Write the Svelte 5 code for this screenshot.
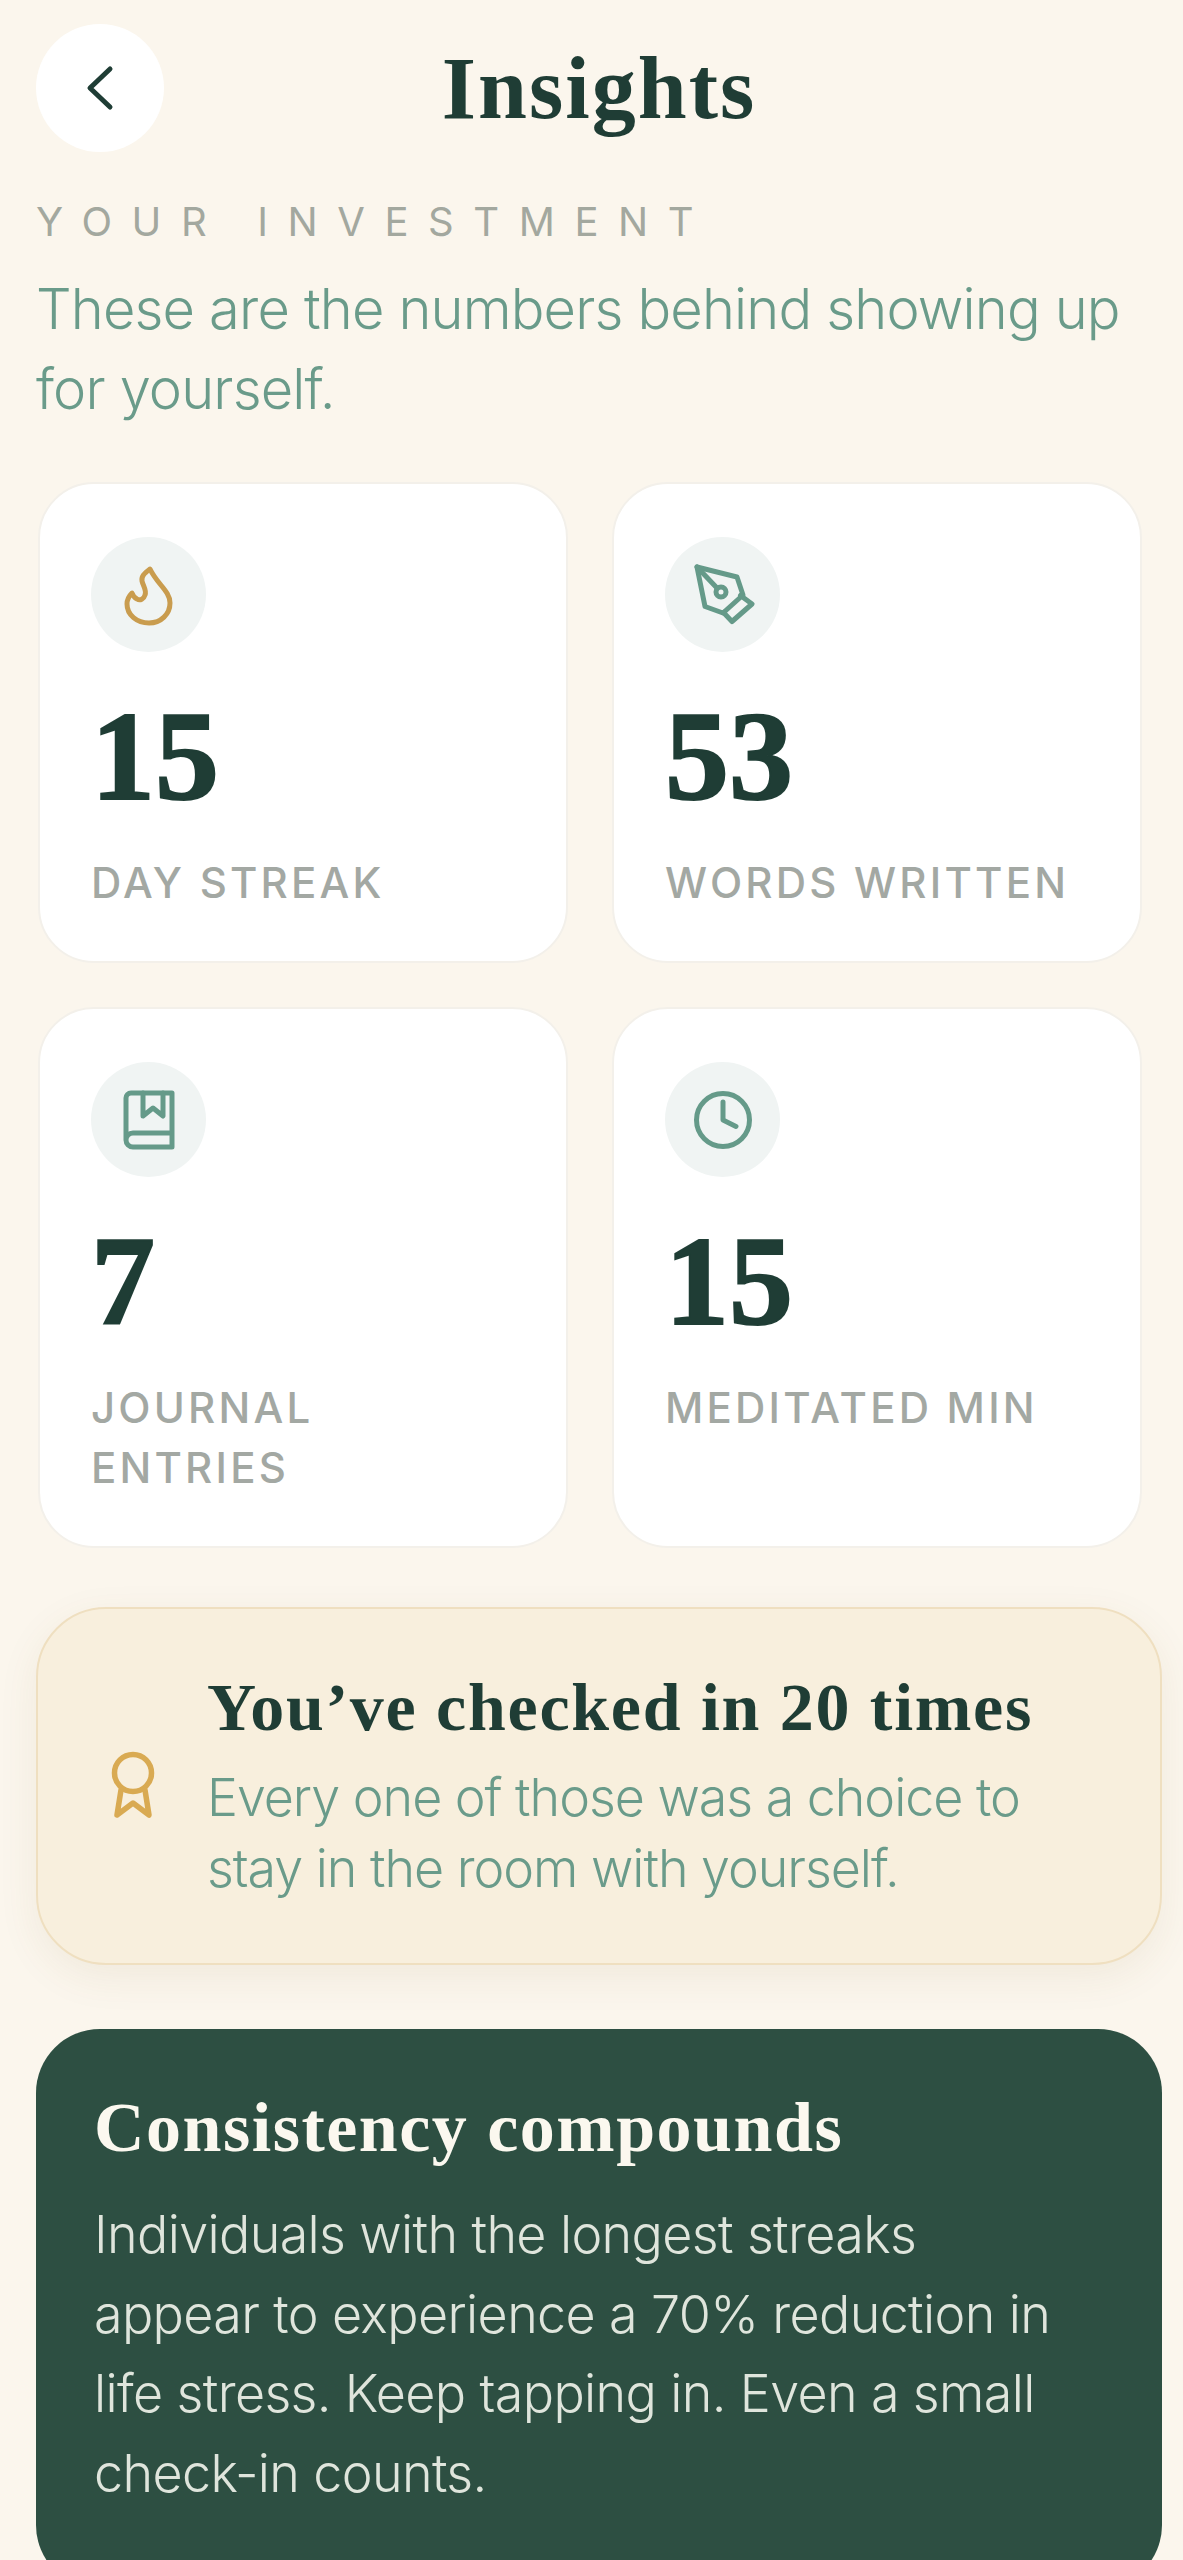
<script>
  const stats = [
    { icon: 'flame', value: '15', label: 'DAY STREAK' },
    { icon: 'pen', value: '53', label: 'WORDS WRITTEN' },
    { icon: 'book', value: '7', label: 'JOURNAL ENTRIES' },
    { icon: 'clock', value: '15', label: 'MEDITATED MIN' }
  ];
</script>

<div class="page">
  <header class="top">
    <button class="back" aria-label="Back">
      <svg width="40" height="52" viewBox="0 0 40 52" fill="none" stroke="#1f3d35" stroke-width="5" stroke-linecap="round" stroke-linejoin="round">
        <path d="M30 7 L10 26 L30 45" />
      </svg>
    </button>
    <h1>Insights</h1>
    <div class="spacer"></div>
  </header>

  <p class="eyebrow">YOUR INVESTMENT</p>
  <p class="intro">These are the numbers behind showing up for yourself.</p>

  <div class="grid">
    {#each stats as stat}
      <div class="card">
        <div class="icon-wrap">
          {#if stat.icon === 'flame'}
            <svg class="icon" viewBox="0 0 64 64" stroke="#c99c4e">
              <path d="M33 6 C28 10 24 13 25 18 C26 23 30 27 28 32 C27 36 23 38 20 36 C18 35 16 33 15 30 C12 33 10 37 10 41 C10 52 20 60 32 60 C44 60 53 51 53 40 C53 28 40 21 33 6 Z" />
            </svg>
          {:else if stat.icon === 'pen'}
            <svg class="icon" viewBox="0 0 64 64" stroke="#659a89">
              <path d="M6 4 L46 14 L52 32 L32 50 L14 43.5 Z" />
              <path d="M6 4 L26 25" />
              <circle cx="30" cy="29" r="5" />
              <path d="M49.5 32.5 L61 41 L41 58.5 L32.5 49.5" />
            </svg>
          {:else if stat.icon === 'book'}
            <svg class="icon" viewBox="0 0 64 64" stroke="#659a89">
              <path d="M9 52 V10 a5 5 0 0 1 5 -5 H55 V59 H16 a7 7 0 0 1 -7 -7 a7 7 0 0 1 7 -7 H55" />
              <path d="M26 5 V28 L36 20 L46 28 V5" />
            </svg>
          {:else}
            <svg class="icon" viewBox="0 0 64 64" stroke="#659a89">
              <circle cx="32" cy="32" r="26.5" />
              <path d="M32 14 V32 L45 38.5" />
            </svg>
          {/if}
        </div>
        <div class="value">{stat.value}</div>
        <div class="label">{stat.label}</div>
      </div>
    {/each}
  </div>

  <section class="banner">
    <svg class="medal" width="48" height="72" viewBox="0 0 48 72" fill="none" stroke="#d9aa52" stroke-width="5.5" stroke-linecap="round" stroke-linejoin="round">
      <circle cx="24" cy="23" r="18.5" />
      <path d="M12 40 L8 65 L24 53 L40 65 L36 40" />
    </svg>
    <div>
      <h2>You’ve checked in 20 times</h2>
      <p>Every one of those was a choice to stay in the room with yourself.</p>
    </div>
  </section>

  <section class="dark">
    <h2>Consistency compounds</h2>
    <p>Individuals with the longest streaks appear to experience a 70% reduction in life stress. Keep tapping in. Even a small check-in counts.</p>
  </section>
</div>

<style>
  :global(body) {
    margin: 0;
    background: #fbf6ed;
  }

  .page {
    height: 2560px;
    overflow: hidden;
    box-sizing: border-box;
    padding: 24px 21px 0 36px;
    font-family: Inter, "Liberation Sans", sans-serif;
  }

  .top {
    display: flex;
    align-items: center;
  }

  .back {
    width: 128px;
    height: 128px;
    flex: none;
    display: flex;
    align-items: center;
    justify-content: center;
    padding: 0;
    border: none;
    border-radius: 50%;
    background: #fff;
  }

  .spacer {
    width: 128px;
    flex: none;
  }

  h1 {
    flex: 1;
    margin: 0;
    text-align: center;
    font-family: "Liberation Serif", serif;
    font-size: 88px;
    letter-spacing: 2px;
    font-weight: 700;
    color: #1f3d35;
  }

  .eyebrow {
    margin: 46px 0 0;
    font-size: 40px;
    line-height: 48px;
    font-weight: 400;
    letter-spacing: 19.6px;
    color: #a3a89f;
  }

  .intro {
    margin: 23px 0 0;
    width: 1110px;
    font-size: 56px;
    line-height: 80px;
    font-weight: 350;
    letter-spacing: -0.015em;
    color: #6a9b8a;
  }

  .grid {
    display: grid;
    grid-template-columns: 530px 530px;
    gap: 44px;
    margin: 53px 0 0 2px;
  }

  .card {
    box-sizing: border-box;
    padding: 53px 51px 48px;
    background: #fff;
    border: 2px solid #f3f0ea;
    border-radius: 56px;
  }

  .icon-wrap {
    width: 115px;
    height: 115px;
    display: flex;
    align-items: center;
    justify-content: center;
    border-radius: 50%;
    background: #f0f4f3;
  }

  .icon {
    width: 64px;
    height: 64px;
    fill: none;
    stroke-width: 5;
    stroke-linecap: round;
    stroke-linejoin: round;
  }

  .value {
    margin-top: 29px;
    font-family: "Liberation Serif", serif;
    font-size: 128px;
    line-height: 150px;
    font-weight: 700;
    color: #1f3d35;
    -webkit-text-stroke: 2px #1f3d35;
  }

  .label {
    margin-top: 22px;
    font-size: 42px;
    line-height: 60px;
    font-weight: 500;
    letter-spacing: 3.2px;
    color: #a3a8a3;
  }

  .banner {
    display: flex;
    align-items: center;
    gap: 50px;
    box-sizing: border-box;
    height: 358px;
    margin-top: 59px;
    padding-left: 71px;
    background: #f8efdd;
    border: 2px solid #efdfc0;
    border-radius: 70px;
    box-shadow: 0 12px 40px rgba(120, 90, 40, 0.08);
  }

  .banner h2 {
    margin: 0;
    font-family: "Liberation Serif", serif;
    font-size: 68px;
    line-height: 76px;
    letter-spacing: 1.7px;
    font-weight: 700;
    color: #1f3d35;
  }

  .banner p {
    margin: 17px 0 0;
    width: 880px;
    font-size: 52px;
    line-height: 71px;
    font-weight: 350;
    letter-spacing: -0.02em;
    color: #6a9b8a;
  }

  .dark {
    box-sizing: border-box;
    height: 560px;
    margin-top: 64px;
    padding: 60px 68px 0 58px;
    background: #2d4f42;
    border-radius: 64px;
  }

  .dark h2 {
    margin: 0;
    font-family: "Liberation Serif", serif;
    font-size: 70px;
    line-height: 78px;
    letter-spacing: 1.5px;
    font-weight: 700;
    color: #fbf8ef;
  }

  .dark p {
    margin: 28px 0 0;
    font-size: 52px;
    line-height: 79.5px;
    font-weight: 350;
    letter-spacing: -0.012em;
    color: #dfe5dc;
  }
</style>
